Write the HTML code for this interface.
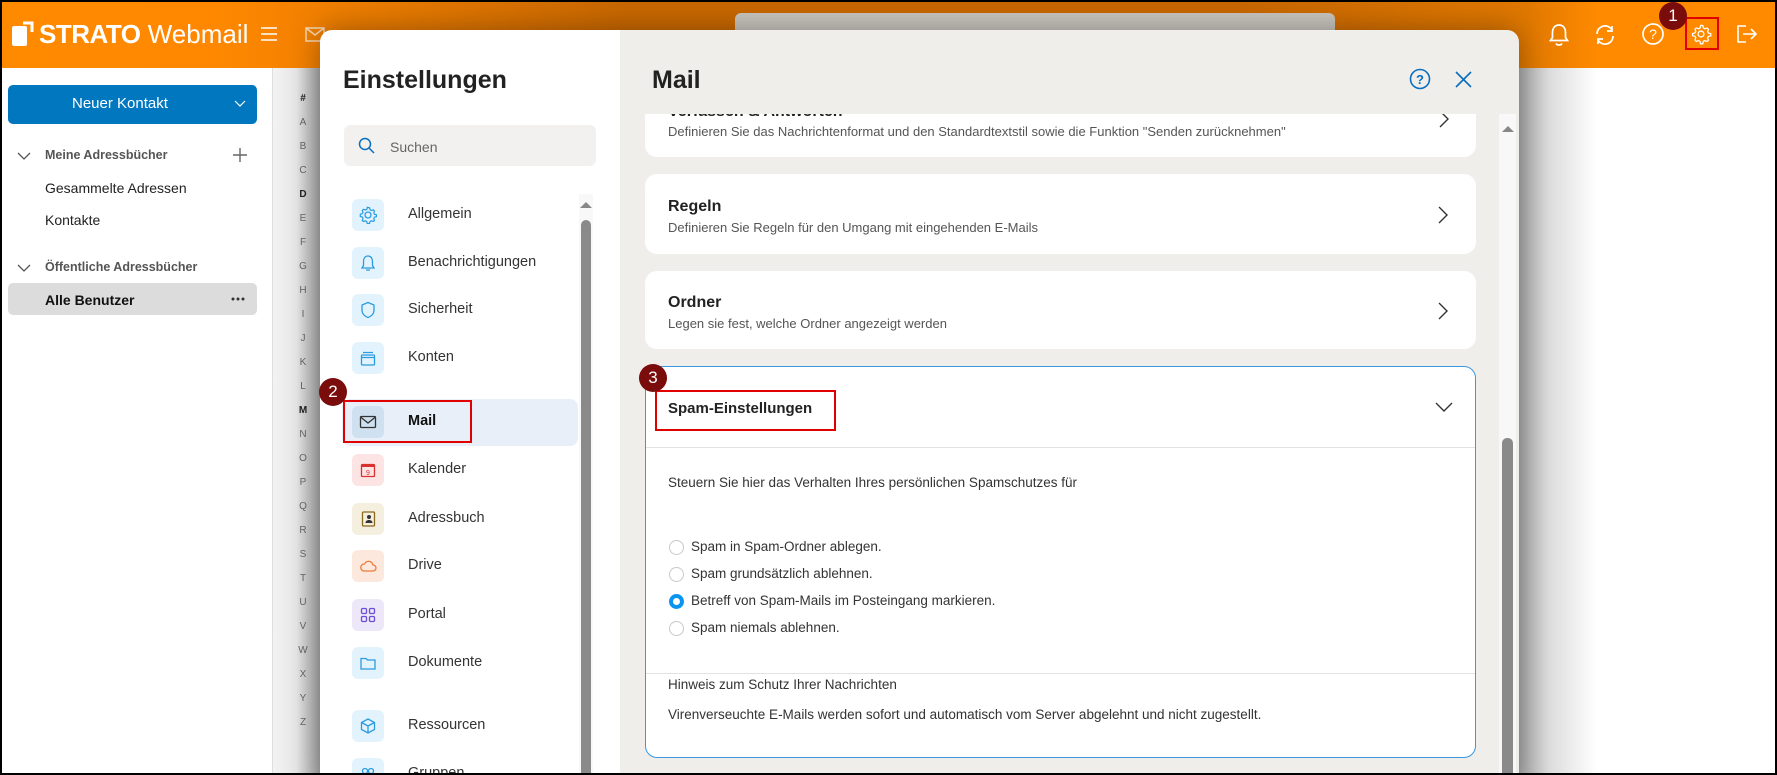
<!DOCTYPE html>
<html><head><meta charset="utf-8">
<style>
*{box-sizing:border-box;margin:0;padding:0}
body{width:1777px;height:775px;overflow:hidden;background:#000;font-family:"Liberation Sans",sans-serif;color:#222;position:relative}
.abs{position:absolute}
#frame{position:absolute;left:2px;top:2px;width:1773px;height:771px;background:#fff;overflow:hidden}
#hdr{position:absolute;left:0;top:0;width:1773px;height:66px;background:linear-gradient(90deg,#ff8a00 0%,#ff8800 12%,#c96800 35%,#c96800 70%,#e07800 86%,#ff8a00 90%,#ff8a00 100%)}
.t{position:absolute;white-space:nowrap}
.ico{position:absolute;width:32px;height:32px;border-radius:6px;display:flex;align-items:center;justify-content:center}
.card{position:absolute;left:643px;width:831px;background:#fff;border-radius:12px}
.ct{font-size:16px;font-weight:bold;color:#222}
.cd{font-size:13px;color:#555}
.radio{position:absolute;left:667px;width:15px;height:15px;border-radius:50%;border:1px solid #c8c8c8;background:#fff}
.rl{position:absolute;left:689px;font-size:13.5px;color:#333}
.badge{position:absolute;width:28px;height:28px;border-radius:50%;background:#7a0c0c;color:#fff;font-size:17px;text-align:center;line-height:28px}
.redbox{position:absolute;border:2px solid #e00000}
.al{position:absolute;left:295px;width:12px;text-align:center;font-size:10px;color:#666}
</style></head><body>
<div id="frame">
<div id="hdr">
  <svg class="abs" style="left:9px;top:18px" width="26" height="28" viewBox="0 0 26 28"><rect x="1" y="6" width="15" height="20" rx="2" fill="#fff"/><path d="M12 3h9v9" stroke="#fff" stroke-width="3" fill="none"/></svg>
  <div class="t" style="left:37px;top:17px;font-size:26px;color:#fff"><b style="letter-spacing:-0.5px">STRATO</b> Webmail</div>
  <svg class="abs" style="left:258px;top:24px" width="18" height="16"><path d="M1 2h16M1 8h16M1 14h16" stroke="#fff" stroke-width="1.6"/></svg>
  <svg class="abs" style="left:303px;top:25px" width="20" height="15"><rect x="1" y="1" width="18" height="13" fill="none" stroke="#f6d7b0" stroke-width="1.5"/><path d="M1 1l9 7 9-7" fill="none" stroke="#f6d7b0" stroke-width="1.5"/></svg>
  <div class="abs" style="left:733px;top:11px;width:600px;height:40px;border-radius:6px;background:#c9c4be"></div>
  <svg class="abs" style="left:1546px;top:21px" width="22" height="24"><path d="M11 2c-4 0-6.5 3-6.5 7.5v5l-2 3h17l-2-3v-5C17.5 5 15 2 11 2zM8 20.5c1 2 5 2 6 0" fill="none" stroke="#fff" stroke-width="1.7"/></svg>
  <svg class="abs" style="left:1592px;top:22px" width="22" height="22"><path d="M3 10a8 8 0 0 1 15-4M19 12a8 8 0 0 1-15 4" fill="none" stroke="#fff" stroke-width="1.7"/><path d="M18 2v5h-5M4 20v-5h5" fill="none" stroke="#fff" stroke-width="1.7"/></svg>
  <svg class="abs" style="left:1639px;top:20px" width="24" height="24"><circle cx="12" cy="12" r="10" fill="none" stroke="#fff" stroke-width="1.7"/><text x="12" y="17" text-anchor="middle" font-size="14" fill="#fff" font-family="Liberation Sans">?</text></svg>
  <svg class="abs" style="left:1688px;top:21px" width="22" height="22" viewBox="0 0 24 24"><path d="M12 2.5l2 .3.6 2.6 1.6.9 2.5-.9 1.4 1.5-.9 2.5.9 1.6 2.6.6v2.4l-2.6.6-.9 1.6.9 2.5-1.5 1.4-2.5-.9-1.6.9-.6 2.6h-2.4l-.6-2.6-1.6-.9-2.5.9-1.4-1.5.9-2.5-.9-1.6-2.6-.6v-2.4l2.6-.6.9-1.6-.9-2.5 1.5-1.4 2.5.9 1.6-.9.6-2.6z" fill="none" stroke="#fff" stroke-width="1.4"/><circle cx="12" cy="12" r="3.2" fill="none" stroke="#fff" stroke-width="1.4"/></svg>
  <svg class="abs" style="left:1734px;top:22px" width="22" height="20"><path d="M10 2H2v16h8" fill="none" stroke="#fff" stroke-width="1.6"/><path d="M7 10h13M15 5l5 5-5 5" fill="none" stroke="#fff" stroke-width="1.6"/></svg>
</div>
<div class="redbox" style="left:1683px;top:15px;width:34px;height:33px"></div>
<div class="badge" style="left:1657px;top:0px">1</div>

<!-- left sidebar -->
<div class="abs" style="left:6px;top:83px;width:249px;height:39px;background:#0077bf;border-radius:5px"></div>
<div class="t" style="left:70px;top:93px;font-size:15px;color:#fff">Neuer Kontakt</div>
<svg class="abs" style="left:232px;top:98px" width="12" height="8"><path d="M1 1l5 5 5-5" stroke="#fff" fill="none" stroke-width="1.2"/></svg>
<svg class="abs" style="left:15px;top:150px" width="14" height="9"><path d="M1 1l6 6 6-6" stroke="#555" fill="none" stroke-width="1.3"/></svg>
<div class="t" style="left:43px;top:146px;font-size:12.5px;font-weight:bold;color:#555">Meine Adressbücher</div>
<svg class="abs" style="left:231px;top:146px" width="14" height="14"><path d="M7 0v14M0 7h14" stroke="#666" stroke-width="1.4"/></svg>
<div class="t" style="left:43px;top:178px;font-size:14px;color:#222">Gesammelte Adressen</div>
<div class="t" style="left:43px;top:210px;font-size:14px;color:#222">Kontakte</div>
<svg class="abs" style="left:15px;top:262px" width="14" height="9"><path d="M1 1l6 6 6-6" stroke="#555" fill="none" stroke-width="1.3"/></svg>
<div class="t" style="left:43px;top:258px;font-size:12.5px;font-weight:bold;color:#555">Öffentliche Adressbücher</div>
<div class="abs" style="left:6px;top:281px;width:249px;height:32px;background:#dcdcdc;border-radius:5px"></div>
<div class="t" style="left:43px;top:290px;font-size:14px;font-weight:bold;color:#111">Alle Benutzer</div>
<svg class="abs" style="left:229px;top:295px" width="14" height="4"><circle cx="2" cy="2" r="1.5" fill="#333"/><circle cx="7" cy="2" r="1.5" fill="#333"/><circle cx="12" cy="2" r="1.5" fill="#333"/></svg>

<!-- alphabet column -->
<div class="abs" style="left:270px;top:66px;width:48px;height:705px;background:linear-gradient(90deg,#f3f3f3 0%,#e6e6e6 50%,#a8a8a8 100%);border-left:1px solid #ddd"></div>
<div id="alpha"></div>

<!-- right shadow area -->
<div class="abs" style="left:1515px;top:66px;width:80px;height:705px;background:linear-gradient(90deg,#a8a8a8 0%,#dcdcdc 40%,#fff 100%)"></div>

<!-- modal -->
<div class="abs" style="left:318px;top:28px;width:1199px;height:760px;border-radius:12px;overflow:hidden;box-shadow:0 0 30px rgba(0,0,0,.35)">
  <div class="abs" style="left:0;top:0;width:300px;height:760px;background:#fff"></div>
  <div class="abs" style="left:300px;top:0;width:899px;height:760px;background:#efeeeb"></div>
</div>

<div class="t" style="left:341px;top:64px;font-size:25px;font-weight:bold;color:#222">Einstellungen</div>
<div class="abs" style="left:342px;top:123px;width:252px;height:41px;background:#f2f1ef;border-radius:6px"></div>
<svg class="abs" style="left:356px;top:135px" width="17" height="17"><circle cx="7" cy="7" r="5.5" fill="none" stroke="#0a6ebd" stroke-width="1.5"/><path d="M11 11l5 5" stroke="#0a6ebd" stroke-width="1.5"/></svg>
<div class="t" style="left:388px;top:137px;font-size:14px;color:#666">Suchen</div>

<!-- left scrollbar -->
<div class="abs" style="left:577px;top:192px;width:14px;height:580px;background:#f8f8f8"></div>
<svg class="abs" style="left:578px;top:199px" width="12" height="8"><path d="M0 7l6-6 6 6z" fill="#888"/></svg>
<div class="abs" style="left:579px;top:218px;width:10px;height:560px;background:#8a8a8a;border-radius:5px"></div>

<!-- menu -->
<div class="abs" style="left:340px;top:397px;width:236px;height:47px;background:#e8eff8;border-radius:8px"></div>
<div id="menu"></div>
<div class="redbox" style="left:341px;top:398px;width:129px;height:43px"></div>
<div class="badge" style="left:317px;top:376px">2</div>

<!-- right pane -->
<div class="t" style="left:650px;top:64px;font-size:25px;font-weight:bold;color:#222">Mail</div>
<svg class="abs" style="left:1407px;top:66px" width="22" height="22"><circle cx="11" cy="11" r="9.5" fill="none" stroke="#0a6ebd" stroke-width="1.6"/><text x="11" y="16" text-anchor="middle" font-size="13" fill="#0a6ebd" font-weight="bold" font-family="Liberation Sans">?</text></svg>
<svg class="abs" style="left:1453px;top:69px" width="17" height="17"><path d="M1 1l15 15M16 1L1 16" stroke="#0a6ebd" stroke-width="1.6"/></svg>

<div class="abs" style="left:640px;top:112px;width:846px;height:660px;overflow:hidden">
  <div class="card" style="left:3px;top:-30px;height:73px"></div>
  <div class="t ct" style="left:26px;top:-11px">Verfassen &amp; Antworten</div>
  <div class="t cd" style="left:26px;top:10px">Definieren Sie das Nachrichtenformat und den Standardtextstil sowie die Funktion "Senden zurücknehmen"</div>
  <svg class="abs" style="left:797px;top:-4px" width="10" height="18"><path d="M1 1l8 8-8 8" stroke="#333" fill="none" stroke-width="1.4"/></svg>
</div>
<div class="abs" style="left:640px;top:100px;width:846px;height:12px;background:#efeeeb"></div>

<div class="card" style="top:172px;height:80px"></div>
<div class="t ct" style="left:666px;top:196px">Regeln</div>
<div class="t cd" style="left:666px;top:218px">Definieren Sie Regeln für den Umgang mit eingehenden E-Mails</div>
<svg class="abs" style="left:1436px;top:204px" width="10" height="18"><path d="M1 1l8 8-8 8" stroke="#333" fill="none" stroke-width="1.4"/></svg>

<div class="card" style="top:269px;height:78px"></div>
<div class="t ct" style="left:666px;top:292px">Ordner</div>
<div class="t cd" style="left:666px;top:314px">Legen sie fest, welche Ordner angezeigt werden</div>
<svg class="abs" style="left:1436px;top:300px" width="10" height="18"><path d="M1 1l8 8-8 8" stroke="#333" fill="none" stroke-width="1.4"/></svg>

<div class="card" style="top:364px;height:392px;border:1.5px solid #3b97e0"></div>
<div class="t" style="left:666px;top:398px;font-size:15px;font-weight:bold;color:#222">Spam-Einstellungen</div>
<svg class="abs" style="left:1433px;top:400px" width="18" height="10"><path d="M1 1l8 8 8-8" stroke="#333" fill="none" stroke-width="1.4"/></svg>
<div class="abs" style="left:644px;top:445px;width:829px;height:1px;background:#e2e2e2"></div>
<div class="redbox" style="left:653px;top:388px;width:181px;height:41px"></div>
<div class="badge" style="left:637px;top:362px">3</div>
<div class="t" style="left:666px;top:473px;font-size:13.5px;color:#333">Steuern Sie hier das Verhalten Ihres persönlichen Spamschutzes für</div>
<div class="radio" style="top:538px"></div><div class="t rl" style="top:537px">Spam in Spam-Ordner ablegen.</div>
<div class="radio" style="top:565px"></div><div class="t rl" style="top:564px">Spam grundsätzlich ablehnen.</div>
<div class="radio" style="top:592px;border:4px solid #0a96f0"></div><div class="t rl" style="top:591px">Betreff von Spam-Mails im Posteingang markieren.</div>
<div class="radio" style="top:619px"></div><div class="t rl" style="top:618px">Spam niemals ablehnen.</div>
<div class="abs" style="left:644px;top:671px;width:829px;height:1px;background:#e2e2e2"></div>
<div class="t" style="left:666px;top:675px;font-size:13.5px;color:#333">Hinweis zum Schutz Ihrer Nachrichten</div>
<div class="t" style="left:666px;top:705px;font-size:13.5px;color:#333">Virenverseuchte E-Mails werden sofort und automatisch vom Server abgelehnt und nicht zugestellt.</div>

<!-- right scrollbar -->
<div class="abs" style="left:1497px;top:112px;width:17px;height:660px;background:#f8f8f8"></div>
<svg class="abs" style="left:1500px;top:123px" width="12" height="8"><path d="M0 7l6-6 6 6z" fill="#888"/></svg>
<div class="abs" style="left:1500px;top:436px;width:11px;height:340px;background:#8a8a8a;border-radius:5px"></div>
</div>

<script>
var L="#ABCDEFGHIJKLMNOPQRSTUVWXYZ".split(""),h="";
L.forEach(function(c,i){var b=(c=="D"||c=="M"||c=="#");h+='<div class="al" style="top:'+(91+i*24)+'px;'+(b?'font-weight:bold;color:#222':'')+'">'+c+'</div>';});
document.getElementById("alpha").innerHTML=h;
var M=[["Allgemein",213,"#e3f3fd",'<circle cx="9" cy="9" r="3" fill="none" stroke="#2a9be0" stroke-width="1.3"/><path d="M9 1.5l1.6.3.5 2 1.3.7 2-.7 1.1 1.2-.7 2 .7 1.3 2 .5v1.8l-2 .5-.7 1.3.7 2-1.2 1.1-2-.7-1.3.7-.5 2H8.2l-.5-2-1.3-.7-2 .7-1.1-1.2.7-2-.7-1.3-2-.5V8.2l2-.5.7-1.3-.7-2 1.2-1.1 2 .7 1.3-.7.5-2z" fill="none" stroke="#2a9be0" stroke-width="1.2"/>'],
["Benachrichtigungen",261,"#e3f3fd",'<path d="M9 2c-3 0-4.5 2.5-4.5 5.5v4L3 14h12l-1.5-2.5v-4C13.5 4.5 12 2 9 2zM7 16h4" fill="none" stroke="#2a9be0" stroke-width="1.3"/>'],
["Sicherheit",308,"#e3f3fd",'<path d="M9 1.5L3 4v5c0 4 3 6.5 6 7.5 3-1 6-3.5 6-7.5V4z" fill="none" stroke="#2a9be0" stroke-width="1.3"/>'],
["Konten",356,"#e3f3fd",'<rect x="2.5" y="6" width="13" height="10" rx="1" fill="none" stroke="#2a9be0" stroke-width="1.3"/><path d="M4 3.5h10M3 8.5h12" stroke="#2a9be0" stroke-width="1.3"/>'],
["Mail",420,"#cfe0f0",'<rect x="1.5" y="3.5" width="15" height="11" rx="1" fill="none" stroke="#333" stroke-width="1.3"/><path d="M1.5 4l7.5 6 7.5-6" fill="none" stroke="#333" stroke-width="1.3"/>'],
["Kalender",468,"#fde4e4",'<rect x="2.5" y="3.5" width="13" height="12" rx="1" fill="none" stroke="#d93030" stroke-width="1.3"/><rect x="2.5" y="3.5" width="13" height="2.5" fill="#d93030"/><text x="9" y="14" text-anchor="middle" font-size="7" fill="#d93030" font-family="Liberation Sans">9</text>'],
["Adressbuch",517,"#f4efde",'<rect x="3.5" y="2" width="12" height="14" rx="1" fill="none" stroke="#8a6b1c" stroke-width="1.3"/><circle cx="10" cy="7" r="2" fill="#333"/><path d="M6.5 13c0-2 1.5-3 3.5-3s3.5 1 3.5 3z" fill="#333"/>'],
["Drive",564,"#fde8dd",'<path d="M5 14h9a3 3 0 0 0 0-6 4.5 4.5 0 0 0-8.5-1A3.5 3.5 0 0 0 5 14z" fill="none" stroke="#ef7a3a" stroke-width="1.3"/>'],
["Portal",613,"#ece8fa",'<rect x="2.5" y="2.5" width="5" height="5" rx="1.2" fill="none" stroke="#6a4fd0" stroke-width="1.3"/><rect x="10.5" y="2.5" width="5" height="5" rx="1.2" fill="none" stroke="#6a4fd0" stroke-width="1.3"/><rect x="2.5" y="10.5" width="5" height="5" rx="1.2" fill="none" stroke="#6a4fd0" stroke-width="1.3"/><rect x="10.5" y="10.5" width="5" height="5" rx="1.2" fill="none" stroke="#6a4fd0" stroke-width="1.3"/>'],
["Dokumente",661,"#e3f3fd",'<path d="M2 4.5h5l1.5 1.5H16v9H2z" fill="none" stroke="#2a9be0" stroke-width="1.3"/>'],
["Ressourcen",724,"#e3f3fd",'<path d="M9 2l6.5 3.5v7L9 16l-6.5-3.5v-7zM2.5 5.5L9 9l6.5-3.5M9 9v7" fill="none" stroke="#2a9be0" stroke-width="1.3"/>'],
["Gruppen",772,"#e3f3fd",'<circle cx="6" cy="6" r="2.5" fill="none" stroke="#2a9be0" stroke-width="1.3"/><circle cx="12" cy="6" r="2.5" fill="none" stroke="#2a9be0" stroke-width="1.3"/>']];
h="";
M.forEach(function(m){h+='<div class="ico" style="left:350px;top:'+(m[1]-16)+'px;background:'+m[2]+'"><svg width="18" height="18" viewBox="0 0 18 18">'+m[3]+'</svg></div><div class="t" style="left:406px;top:'+(m[1]-9)+'px;font-size:14.5px;'+(m[0]=="Mail"?'font-weight:bold;color:#111':'color:#333')+'">'+m[0]+'</div>';});
document.getElementById("menu").innerHTML=h;
</script>
</body></html>
